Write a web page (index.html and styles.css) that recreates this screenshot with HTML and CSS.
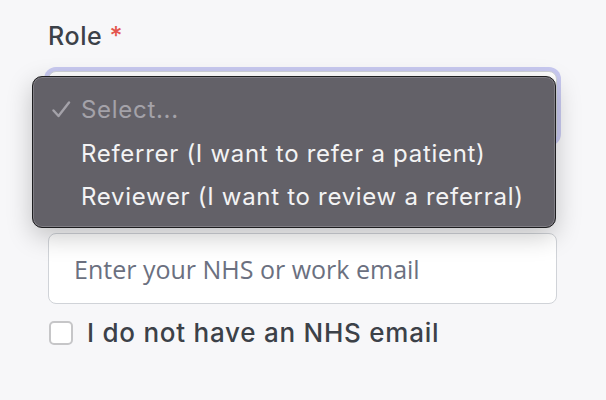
FILE: index.html
```html
<!DOCTYPE html>
<html>
<head>
<meta charset="utf-8">
<link rel="stylesheet" href="styles.css">
</head>
<body>
<div class="form">
  <label class="label">Role <span class="req">*</span></label>
  <div class="select"></div>
  <div class="input">Enter your NHS or work email</div>
  <div class="check-row">
    <span class="checkbox"></span>
    <span class="check-label">I do not have an NHS email</span>
  </div>
</div>
<div class="menu">
  <div class="item disabled"><span class="tick"><svg width="19" height="17" viewBox="0 0 19 17"><polyline points="1.5,9.5 6.5,15 17,1.5" fill="none" stroke="#a4a2a9" stroke-width="2.4" stroke-linecap="round" stroke-linejoin="round"/></svg></span>Select...</div>
  <div class="item"><span class="tick"></span>Referrer (I want to refer a patient)</div>
  <div class="item"><span class="tick"></span>Reviewer (I want to review a referral)</div>
</div>
</body>
</html>
```
FILE: styles.css
```css
html, body {
  margin: 0;
  padding: 0;
}
body {
  background: #f7f7f9;
  width: 606px;
  height: 400px;
  overflow: hidden;
  position: relative;
  font-family: Inter, "Open Sans", sans-serif;
}
.form {
  display: flex;
  flex-direction: column;
  padding: 17px 49px 0 48px;
}
.label {
  font-size: 25px;
  line-height: 39px;
  font-weight: 500;
  color: #3c4148;
  letter-spacing: 0.6px;
}
.req {
  color: #e4554d;
}
.select {
  margin-top: 15px;
  height: 71px;
  box-sizing: border-box;
  background: #fff;
  border: 1px solid #d0d3d8;
  border-radius: 8px;
  box-shadow: 0 0 0 4px #c8c9f0;
}
.input {
  margin-top: 91px;
  height: 71px;
  box-sizing: border-box;
  background: #fff;
  border: 1px solid #d0d3d8;
  border-radius: 8px;
  padding-left: 25px;
  display: flex;
  align-items: center;
  font-family: "Open Sans", sans-serif;
  font-size: 25px;
  color: #6b7080;
}
.check-row {
  margin-top: 9px;
  display: flex;
  align-items: center;
  gap: 14px;
  line-height: 39px;
}
.checkbox {
  width: 24px;
  height: 24px;
  box-sizing: border-box;
  margin-left: 1px;
  border: 2px solid #c6c6c8;
  border-radius: 5px;
  background: #fff;
}
.check-label {
  font-size: 26px;
  font-weight: 500;
  color: #3c4148;
  letter-spacing: 0.75px;
}
.menu {
  position: absolute;
  left: 32px;
  top: 76px;
  width: 524px;
  height: 152px;
  box-sizing: border-box;
  padding-top: 11px;
  background: #636168;
  border: 1px solid #1e1e20;
  border-radius: 10px;
  box-shadow: inset 0 0 0 1px #807e85, 0 8px 26px rgba(0, 0, 0, 0.22);
  font-family: Inter, "Liberation Sans", sans-serif;
  font-size: 24px;
  letter-spacing: 0.7px;
  color: #f3f3f4;
}
.item {
  display: flex;
  align-items: center;
  height: 43.5px;
  padding-left: 19px;
}
.tick {
  width: 29px;
  flex: none;
  display: flex;
  align-items: center;
}
.disabled {
  color: #a4a2a9;
}
```
